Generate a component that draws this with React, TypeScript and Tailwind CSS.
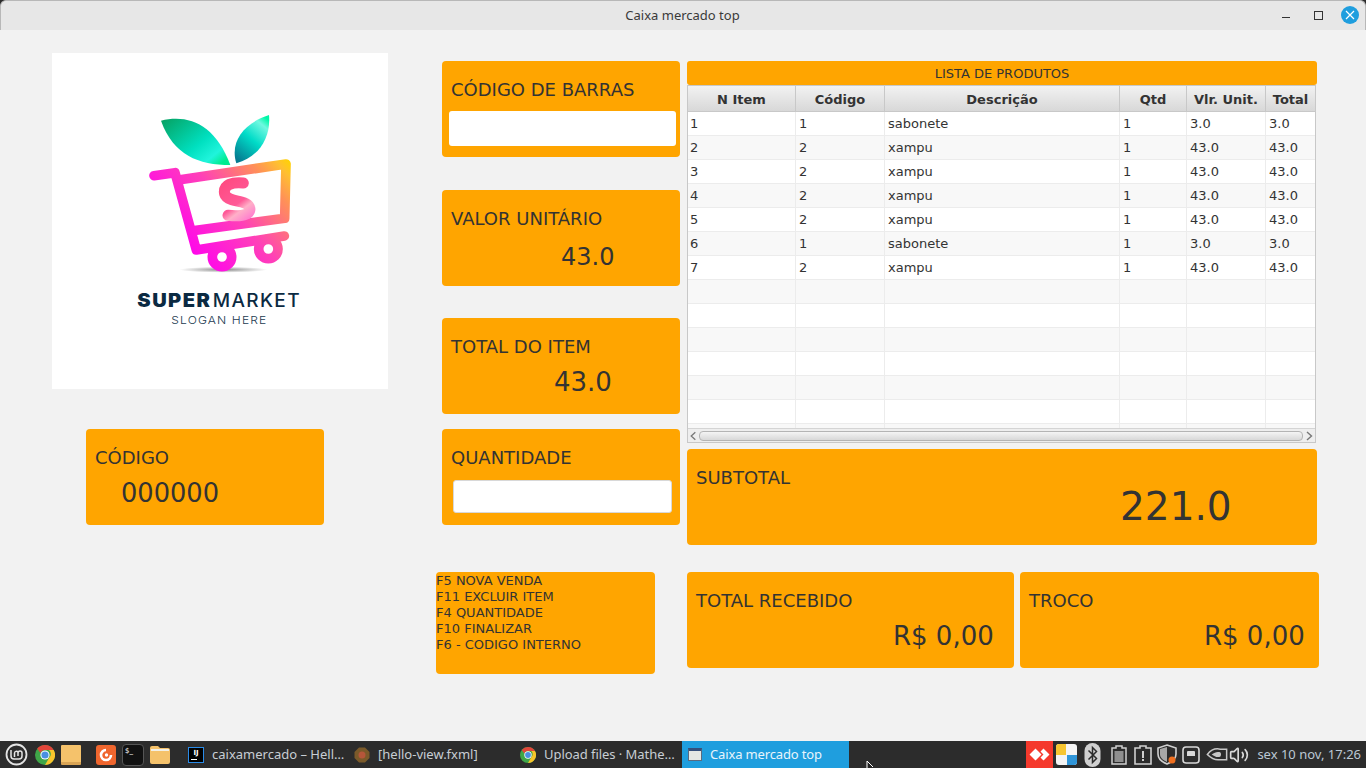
import React from 'react';
import { Volume2 } from 'lucide-react';

const font = { fontFamily: '"DejaVu Sans", sans-serif' };

const rows = [
  ['1', '1', 'sabonete', '1', '3.0', '3.0'],
  ['2', '2', 'xampu', '1', '43.0', '43.0'],
  ['3', '2', 'xampu', '1', '43.0', '43.0'],
  ['4', '2', 'xampu', '1', '43.0', '43.0'],
  ['5', '2', 'xampu', '1', '43.0', '43.0'],
  ['6', '1', 'sabonete', '1', '3.0', '3.0'],
  ['7', '2', 'xampu', '1', '43.0', '43.0'],
  ['', '', '', '', '', ''],
  ['', '', '', '', '', ''],
  ['', '', '', '', '', ''],
  ['', '', '', '', '', ''],
  ['', '', '', '', '', ''],
  ['', '', '', '', '', ''],
  ['', '', '', '', '', ''],
];

const heads = ['N Item', 'Código', 'Descrição', 'Qtd', 'Vlr. Unit.', 'Total'];
const widths = ['w-[108px]', 'w-[89px]', 'w-[235px]', 'w-[67px]', 'w-[79px]', 'w-[50px]'];

const Logo = () => (
  <svg width="190" height="235" viewBox="0 0 570 705">
    <defs>
      <linearGradient id="cart" gradientUnits="userSpaceOnUse" x1="170" y1="470" x2="490" y2="190">
        <stop offset="0" stopColor="#ff00f0" />
        <stop offset="0.45" stopColor="#ff40b8" />
        <stop offset="0.78" stopColor="#ff9058" />
        <stop offset="0.92" stopColor="#ffc030" />
        <stop offset="1" stopColor="#ffd400" />
      </linearGradient>
      <linearGradient id="ess" gradientUnits="userSpaceOnUse" x1="280" y1="240" x2="370" y2="360">
        <stop offset="0" stopColor="#ff4a80" />
        <stop offset="0.55" stopColor="#ff5a98" />
        <stop offset="0.7" stopColor="#ffb0c8" />
        <stop offset="1" stopColor="#ff70d0" />
      </linearGradient>
      <linearGradient id="leafA" x1="0" y1="0" x2="1" y2="0.8">
        <stop offset="0" stopColor="#06a060" />
        <stop offset="0.6" stopColor="#00e0c0" />
        <stop offset="0.85" stopColor="#20f4dc" />
        <stop offset="1" stopColor="#00ec90" />
      </linearGradient>
      <linearGradient id="leafB" x1="0.2" y1="1" x2="0.8" y2="0">
        <stop offset="0" stopColor="#057a90" />
        <stop offset="0.5" stopColor="#00dcc8" />
        <stop offset="0.85" stopColor="#70f8e0" />
        <stop offset="1" stopColor="#00f8a8" />
      </linearGradient>
      <radialGradient id="shade">
        <stop offset="0" stopColor="#8a8a8a" />
        <stop offset="1" stopColor="#ffffff" />
      </radialGradient>
    </defs>
    <ellipse cx="280" cy="509" rx="132" ry="9" fill="url(#shade)" />
    <path d="M93 62C175 42 255 72 301 195C205 195 130 165 93 62Z" fill="url(#leafA)" />
    <path d="M417 45C345 68 298 122 319 190C388 170 423 112 417 45Z" fill="url(#leafB)" />
    <g fill="none" stroke="url(#cart)" strokeWidth="29" strokeLinecap="round" strokeLinejoin="round">
      <path d="M72 227L135 218L199 450L463 408" />
      <path d="M145 240L468 192L464 355L188 392" />
      <circle cx="276" cy="471" r="29" />
      <circle cx="415" cy="447" r="29" />
    </g>
    <path
      d="M340 249C305 246 283 254 283 276C283 298 312 300 335 306C356 312 362 322 359 332C354 348 320 349 294 346"
      fill="none"
      stroke="url(#ess)"
      strokeWidth="33"
      strokeLinecap="round"
    />
    <text x="22" y="622" fontFamily="Inter, sans-serif" fontSize="55" fontWeight="900" letterSpacing="4" fill="#0b2a42" textLength="222" lengthAdjust="spacingAndGlyphs">SUPER</text>
    <text x="248" y="622" fontFamily="Inter, sans-serif" fontSize="55" fontWeight="500" letterSpacing="4" fill="#0b2a42" textLength="265" lengthAdjust="spacingAndGlyphs">MARKET</text>
    <text x="124" y="672" fontFamily="Inter, sans-serif" fontSize="32" fontWeight="300" letterSpacing="3" fill="#1c3a50" textLength="288" lengthAdjust="spacingAndGlyphs">SLOGAN HERE</text>
  </svg>
);

const Chrome = ({ size }: { size: number }) => (
  <svg width={size} height={size} viewBox="0 0 20 20" className="shrink-0">
    <circle cx="10" cy="10" r="10" fill="#3fa648" />
    <path d="M10 0a10 10 0 0 1 8.700 5H10a5 5 0 0 0-4.600 3L2.200 3.600A10 10 0 0 1 10 0Z" fill="#e2453a" />
    <path d="M18.700 5A10 10 0 0 1 10 20l4.300-7.500A5 5 0 0 0 14 5Z" fill="#f8c52c" />
    <circle cx="10" cy="10" r="4.600" fill="#fff" />
    <circle cx="10" cy="10" r="3.600" fill="#4a8fe0" />
  </svg>
);

const Taskbar = () => (
  <div className="h-[27px] bg-[#2c2c2c] flex items-center text-[13px] text-[#c8ced4] relative" style={{ fontFamily: '"Noto Sans", sans-serif' }}>
    <div className="flex items-center pl-[5px] w-[682px]">
      <svg width="23" height="23" viewBox="0 0 23 23" className="shrink-0">
        <circle cx="11.500" cy="11.500" r="10" fill="none" stroke="#e4e4e4" strokeWidth="1.800" />
        <path d="M6 7v6a3 3 0 0 0 3 3h5a3 3 0 0 0 3-3V10a2 2 0 0 0-4 0v3M9.500 14v-4a2 2 0 0 1 3.500-1" fill="none" stroke="#e4e4e4" strokeWidth="1.500" />
      </svg>
      <div className="ml-[7px]"><Chrome size={20} /></div>
      <div className="ml-[6px] w-[20px] h-[20px] rounded-[1px] bg-[#f5c26b] border-b-[3px] border-[#d9a455]" />
      <div className="ml-[15px] w-[20px] h-[20px] rounded-[3px] bg-[#f0662e] flex items-center justify-center">
        <svg width="14" height="14" viewBox="0 0 14 14">
          <path d="M7 2a5 5 0 1 0 5 5" fill="none" stroke="#fff" strokeWidth="2.600" />
          <circle cx="7.500" cy="7" r="1.700" fill="#fff" />
        </svg>
      </div>
      <div className="ml-[6px] w-[22px] h-[22px] rounded-[4px] bg-[#111] border border-[#555] text-[7px] leading-[9px] text-white pl-[2px] pt-[2px]" style={font}>$_</div>
      <svg width="20" height="18" viewBox="0 0 20 18" className="ml-[6px] shrink-0">
        <path d="M0 2a2 2 0 0 1 2-2h6l2 2h8a2 2 0 0 1 2 2v12a2 2 0 0 1-2 2H2a2 2 0 0 1-2-2Z" fill="#f5c26b" />
        <path d="M1 3h18v2H1Z" fill="#f3f0e6" />
      </svg>
      <div className="ml-[18px] w-[16px] h-[16px] bg-black border border-[#2a8be8] text-white text-[7px] font-bold leading-[8px] text-center pt-[1px] shrink-0" style={font}>
        IJ
        <div className="w-[6px] h-[1px] bg-white ml-[2px] mt-[2px]" />
      </div>
      <span className="ml-[8px] w-[142px] shrink-0 whitespace-nowrap">caixamercado – Hell…</span>
      <svg width="16" height="16" viewBox="0 0 16 16" className="shrink-0">
        <path d="M5 .500h6L15.500 5v6L11 15.500H5L.500 11V5Z" fill="#7b5a2a" />
        <circle cx="8" cy="8" r="3.500" fill="#b5563a" />
      </svg>
      <span className="ml-[8px] w-[142px] shrink-0 whitespace-nowrap">[hello-view.fxml]</span>
      <Chrome size={16} />
      <span className="ml-[8px] whitespace-nowrap tracking-[-0.05px]">Upload files · Mathe…</span>
    </div>
    <div className="w-[167px] h-full bg-[#1f9ede] flex items-center pl-[6px] text-white">
      <div className="w-[14px] h-[13px] bg-[#e4e8e4] border border-[#5a6a80] border-t-[3px] border-t-[#34507c]" />
      <span className="ml-[8px] whitespace-nowrap text-[#e8f4fb] tracking-[-0.15px]">Caixa mercado top</span>
    </div>
    <svg width="12" height="8" viewBox="0 0 12 8" className="absolute left-[866px] bottom-0">
      <path d="M1 8V1l6 6" fill="#222" stroke="#fff" strokeWidth="1" />
    </svg>
    <div className="flex-1" />
    <div className="w-[27px] h-full bg-[#f5392c] flex items-center justify-center">
      <svg width="21" height="13" viewBox="0 0 21 13">
        <path d="M6.500.500l6 6-6 6-6-6Z M14.500.500l6 6-6 6-3-3 3-3-3-3Z" fill="#fff" />
      </svg>
    </div>
    <svg width="21" height="21" viewBox="0 0 21 21" className="ml-[3px] shrink-0">
      <rect width="21" height="21" rx="3" fill="#f4f4f4" />
      <path d="M0 3a3 3 0 0 1 3-3h7v11H0Z" fill="#f7c52f" />
      <path d="M11 11h10v7a3 3 0 0 1-3 3h-7Z" fill="#2f95d8" />
    </svg>
    <svg width="17" height="24" viewBox="0 0 16 24" className="ml-[7px] shrink-0">
      <rect width="16" height="24" rx="8" fill="#d0d0d0" />
      <path d="M4 7.500l8 8-4 4V4.500l4 4-8 8" fill="none" stroke="#2c2c2c" strokeWidth="1.500" />
    </svg>
    <svg width="16" height="20" viewBox="0 0 16 20" className="ml-[10px] shrink-0">
      <path d="M5 1h6v2h4v16H1V3h4Z" fill="none" stroke="#d0d0d0" strokeWidth="1.500" />
      <rect x="3.500" y="6" width="9" height="11" fill="#8f8f8f" />
    </svg>
    <svg width="18" height="20" viewBox="0 0 18 20" className="ml-[7px] shrink-0">
      <path d="M6 3V1h6v2h5v16H1V3Z" fill="none" stroke="#d0d0d0" strokeWidth="1.600" />
      <path d="M8 6h2v7H8ZM8 14h2v2H8Z" fill="#d0d0d0" />
    </svg>
    <svg width="20" height="21" viewBox="0 0 20 21" className="ml-[5px] shrink-0">
      <path d="M10 1l9 3v6c0 5-4 8-9 10C5 18 1 15 1 10V4Z" fill="none" stroke="#d0d0d0" strokeWidth="1.600" />
      <path d="M10 3v15C6 16 3 14 3 10V5Z" fill="#a8a8a8" />
      <circle cx="15" cy="16" r="3.500" fill="#f07020" />
    </svg>
    <svg width="18" height="18" viewBox="0 0 18 18" className="ml-[5px] shrink-0">
      <rect x="1" y="1" width="16" height="16" rx="3" fill="none" stroke="#d8d8d8" strokeWidth="1.600" />
      <path d="M5 10V6a1 1 0 0 1 1-1h6a1 1 0 0 1 1 1v4Z" fill="#d8d8d8" />
    </svg>
    <svg width="24" height="15" viewBox="0 0 20 14" className="ml-[5px] shrink-0">
      <path d="M1 7c3-4 7-6 12-5h6v10h-8C7 12 4 10 1 7Z" fill="none" stroke="#c8c8c8" strokeWidth="1.400" />
      <path d="M5 7c3-2 5-3 8-2 1 1 1 3 0 4-3 1-5 0-8-2Z" fill="#c8c8c8" />
    </svg>
    <Volume2 size={20} className="shrink-0 text-[#d8d8d8]" />
    <span className="ml-[8px] mr-[5px] whitespace-nowrap text-[#bcc8d4]">sex 10 nov, 17:26</span>
  </div>
);

export default function App() {
  return (
    <div className="w-[1366px] h-[768px] overflow-hidden flex flex-col bg-[#2c2c2c] text-[#333333]" style={font}>
      <div className="h-[30px] shrink-0 bg-[#e7e7e7] rounded-t-[6px] border-t border-x border-[#b8b8b8] flex items-center relative" style={{ fontFamily: '"Noto Sans", sans-serif' }}>
        <div className="flex-1 text-center text-[13px] text-[#3a3a3a] -ml-[1px]">Caixa mercado top</div>
        <div className="absolute right-[6px] top-[5px] flex items-center">
          <div className="w-[8px] h-[1px] bg-[#333] mt-[4px]" />
          <div className="w-[9px] h-[9px] border border-[#333] ml-[24px]" />
          <div className="w-[18px] h-[18px] rounded-full bg-[#1f9ede] ml-[18px] flex items-center justify-center">
            <svg width="10" height="10" viewBox="0 0 10 10">
              <path d="M1 1l8 8M9 1l-8 8" stroke="#fff" strokeWidth="1.200" />
            </svg>
          </div>
        </div>
      </div>

      <div className="flex-1 bg-[#f2f2f2] flex pl-[52px]">
        <div className="w-[336px] shrink-0">
          <div className="w-[336px] h-[336px] mt-[23px] bg-white pl-[78px] pt-[47px]">
            <Logo />
          </div>
          <div className="w-[238px] h-[96px] mt-[40px] ml-[34px] bg-[#ffa500] rounded-[4px] pl-[9px] pt-[17px]">
            <div className="text-[18px] leading-[24px]">CÓDIGO</div>
            <div className="text-[25.7px] leading-[34px] pl-[26px] mt-[6px]">000000</div>
          </div>
        </div>

        <div className="w-[238px] ml-[54px] shrink-0 pt-[31px]">
          <div className="h-[96px] bg-[#ffa500] rounded-[4px] pt-[17px] pl-[9px]">
            <div className="text-[18px] leading-[24px]">CÓDIGO DE BARRAS</div>
            <div className="w-[227px] h-[35px] bg-white rounded-[3px] -ml-[2px] mt-[9px]" />
          </div>
          <div className="h-[96px] mt-[33px] bg-[#ffa500] rounded-[4px] pt-[17px] pl-[9px]">
            <div className="text-[18px] leading-[24px]">VALOR UNITÁRIO</div>
            <div className="text-[24px] leading-[32px] mt-[10px] pl-[110px]">43.0</div>
          </div>
          <div className="h-[96px] mt-[32px] bg-[#ffa500] rounded-[4px] pt-[17px] pl-[9px]">
            <div className="text-[18px] leading-[24px]">TOTAL DO ITEM</div>
            <div className="text-[26px] leading-[32px] mt-[7px] pl-[103px]">43.0</div>
          </div>
          <div className="h-[96px] mt-[15px] bg-[#ffa500] rounded-[4px] pt-[17px] pl-[9px]">
            <div className="text-[18px] leading-[24px]">QUANTIDADE</div>
            <div className="w-[219px] h-[33px] bg-white rounded-[3px] border border-[#d8d8d8] ml-[2px] mt-[10px]" />
          </div>
          <div className="w-[219px] h-[102px] mt-[47px] -ml-[6px] bg-[#ffa500] rounded-[4px] text-[13px] leading-[16px] pt-[1px]">
            <div>F5 NOVA VENDA</div>
            <div>F11 EXCLUIR ITEM</div>
            <div>F4 QUANTIDADE</div>
            <div>F10 FINALIZAR</div>
            <div>F6 - CODIGO INTERNO</div>
          </div>
        </div>

        <div className="w-[632px] ml-[7px] shrink-0 pt-[31px]">
          <div className="w-[630px] h-[24px] bg-[#ffa500] rounded-[3px] text-[13px] leading-[25px] text-center">LISTA DE PRODUTOS</div>
          <div className="w-[629px] h-[358px] border border-[#c8c8c8] bg-white flex flex-col overflow-hidden">
            <div className="h-[26px] shrink-0 flex border-b border-[#c8c8c8] bg-gradient-to-b from-[#f2f2f2] to-[#d8d8d8] text-[13px] font-bold leading-[28px]">
              {heads.map((h, i) => (
                <div key={h} className={`${widths[i]} shrink-0 text-center border-r border-[#c8c8c8] whitespace-nowrap`}>{h}</div>
              ))}
            </div>
            <div className="flex-1 overflow-hidden">
              {rows.map((r, i) => (
                <div key={i} className={`h-[24px] flex border-b border-[#ececec] text-[13px] leading-[23px] ${i % 2 ? 'bg-[#f8f8f8]' : 'bg-white'}`}>
                  {r.map((c, j) => (
                    <div key={j} className={`${widths[j]} shrink-0 border-r border-[#ececec] whitespace-nowrap ${j === 0 ? 'pl-[2px]' : 'pl-[3px]'}`}>{c}</div>
                  ))}
                </div>
              ))}
            </div>
            <div className="h-[14px] shrink-0 bg-[#eeeeee] border-t border-[#d4d4d4] flex items-center">
              <svg width="11" height="12" viewBox="0 0 12 12" className="shrink-0">
                <path d="M8 2L3.500 6L8 10" fill="none" stroke="#777" strokeWidth="1.400" />
              </svg>
              <div className="w-[605px] h-[10px] rounded-[4px] border border-[#b4b4b4] bg-gradient-to-b from-[#f4f4f4] to-[#d8d8d8]" />
              <svg width="12" height="12" viewBox="0 0 12 12" className="shrink-0">
                <path d="M4 2L8.500 6L4 10" fill="none" stroke="#777" strokeWidth="1.400" />
              </svg>
            </div>
          </div>
          <div className="w-[630px] h-[96px] mt-[6px] bg-[#ffa500] rounded-[4px] pt-[17px] pl-[9px] relative">
            <div className="text-[18px] leading-[24px]">SUBTOTAL</div>
            <div className="text-[39px] leading-[48px] pl-[424px] -mt-[7px]">221.0</div>
          </div>
          <div className="flex gap-[6px] mt-[27px]">
            <div className="w-[327px] h-[96px] bg-[#ffa500] rounded-[4px] pt-[17px] pl-[9px]">
              <div className="text-[18px] leading-[24px]">TOTAL RECEBIDO</div>
              <div className="text-[26px] leading-[34px] mt-[6px] pl-[197px] whitespace-nowrap">R$ 0,00</div>
            </div>
            <div className="w-[299px] h-[96px] bg-[#ffa500] rounded-[4px] pt-[17px] pl-[9px]">
              <div className="text-[18px] leading-[24px]">TROCO</div>
              <div className="text-[26px] leading-[34px] mt-[6px] pl-[175px] whitespace-nowrap">R$ 0,00</div>
            </div>
          </div>
        </div>
      </div>

      <Taskbar />
    </div>
  );
}
